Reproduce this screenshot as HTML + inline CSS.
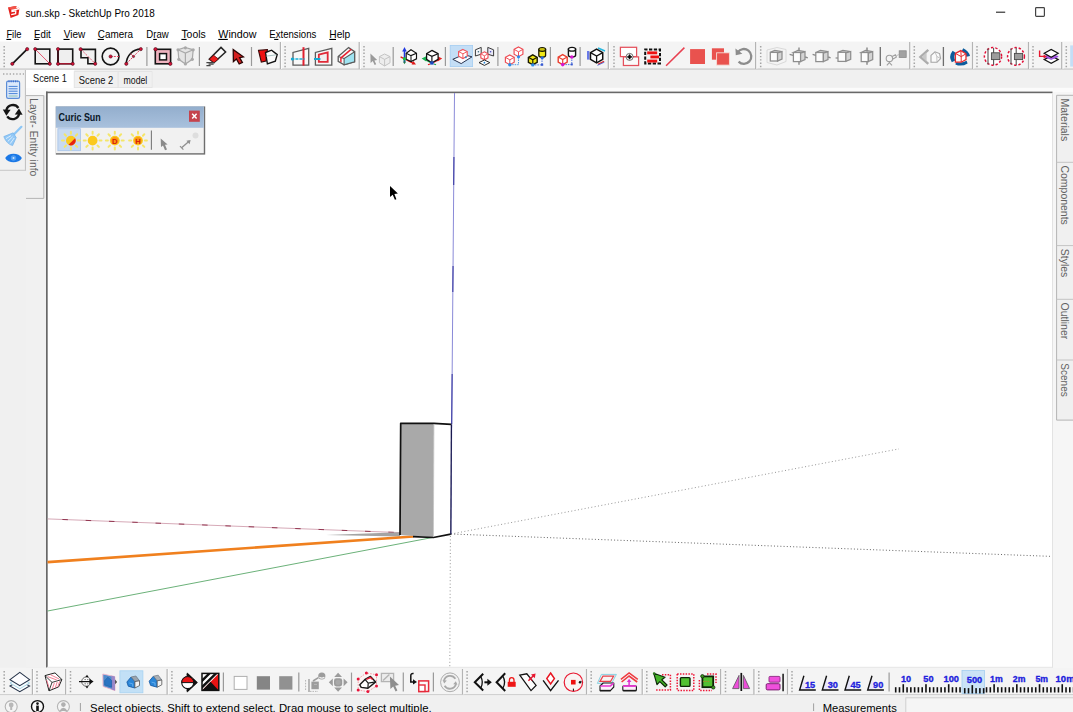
<!DOCTYPE html>
<html><head><meta charset="utf-8"><title>sun.skp - SketchUp Pro 2018</title>
<style>
html,body{margin:0;padding:0;}
body{width:1073px;height:712px;overflow:hidden;background:#fff;position:relative;font-family:"Liberation Sans",sans-serif;color:#000;}
svg{position:absolute;left:0;top:0;}
svg text{font-family:"Liberation Sans",sans-serif;}
</style></head><body>
<svg width="1073" height="712" viewBox="0 0 1073 712">
<!-- base -->
<rect x="0" y="0" width="1073" height="712" fill="#ffffff"/>
<rect x="0" y="41" width="1073" height="1" fill="#fafafa"/><rect x="0" y="42" width="1073" height="27" fill="#f4f4f4"/>
<rect x="0" y="68.5" width="1073" height="1.2" fill="#c4c4c4"/>
<rect x="0" y="70" width="1073" height="598" fill="#f0f0f0"/>
<rect x="26" y="87.6" width="1047" height="4.6" fill="#fbfbfb"/>
<rect x="46" y="92" width="1007" height="575.5" fill="#ffffff"/>
<rect x="46" y="91.6" width="1006.5" height="1.6" fill="#686868"/>
<rect x="46" y="91.6" width="1.7" height="576" fill="#686868"/>
<rect x="1052" y="93" width="1" height="575" fill="#e3e3e3"/>
<rect x="47" y="666.8" width="1006" height="1" fill="#e3e3e3"/>
<rect x="0" y="667.8" width="1073" height="27" fill="#f4f4f4"/>
<rect x="0" y="694.2" width="1073" height="1.2" fill="#c8c8c8"/>
<rect x="0" y="695.4" width="1073" height="17" fill="#f0f0f0"/>
<!-- title -->
<g><path d="M8 7.6 L15.6 6 L19.4 8.6 L18.4 15 L10.6 17.9 Z" fill="#e4201c"/><path d="M8 7.6 L15.6 6 L19.4 8.6 L11.6 10 Z" fill="#f2544a"/><path d="M16.4 7 L18.8 8.8 L12 10.2 L12 11.4 L15.8 10.9 L15.6 13.6 L11.2 14.6" fill="none" stroke="#fff" stroke-width="1.3"/></g>
<text x="25.5" y="16.6" font-size="11.2" fill="#000" font-weight="normal" textLength="129.2" lengthAdjust="spacingAndGlyphs">sun.skp - SketchUp Pro 2018</text>
<line x1="996" y1="12.2" x2="1005.2" y2="12.2" stroke="#222" stroke-width="1.1"/>
<rect x="1035.6" y="7.6" width="8.8" height="8.8" fill="none" stroke="#444" stroke-width="1.2" rx="0.8"/>
<!-- menu -->
<text x="6.4" y="37.8" font-size="10.8" fill="#000" font-weight="normal" textLength="15.1" lengthAdjust="spacingAndGlyphs">File</text>
<rect x="6.4" y="38.9" width="4.8" height="1.1" fill="#000"/>
<text x="34.1" y="37.8" font-size="10.8" fill="#000" font-weight="normal" textLength="16.7" lengthAdjust="spacingAndGlyphs">Edit</text>
<rect x="34.1" y="38.9" width="4.8" height="1.1" fill="#000"/>
<text x="63.7" y="37.8" font-size="10.8" fill="#000" font-weight="normal" textLength="21.5" lengthAdjust="spacingAndGlyphs">View</text>
<rect x="63.5" y="38.9" width="6.1" height="1.1" fill="#000"/>
<text x="97.8" y="37.8" font-size="10.8" fill="#000" font-weight="normal" textLength="35.2" lengthAdjust="spacingAndGlyphs">Camera</text>
<rect x="97.8" y="38.9" width="6.1" height="1.1" fill="#000"/>
<text x="146.3" y="37.8" font-size="10.8" fill="#000" font-weight="normal" textLength="22.3" lengthAdjust="spacingAndGlyphs">Draw</text>
<rect x="153.2" y="38.9" width="3.6" height="1.1" fill="#000"/>
<text x="181.4" y="37.8" font-size="10.8" fill="#000" font-weight="normal" textLength="24.3" lengthAdjust="spacingAndGlyphs">Tools</text>
<rect x="181.4" y="38.9" width="5.2" height="1.1" fill="#000"/>
<text x="218.3" y="37.8" font-size="10.8" fill="#000" font-weight="normal" textLength="38.1" lengthAdjust="spacingAndGlyphs">Window</text>
<rect x="218.3" y="38.9" width="9.5" height="1.1" fill="#000"/>
<text x="269.3" y="37.8" font-size="10.8" fill="#000" font-weight="normal" textLength="47.0" lengthAdjust="spacingAndGlyphs">Extensions</text>
<rect x="274.2" y="38.9" width="4.2" height="1.1" fill="#000"/>
<text x="329.3" y="37.8" font-size="10.8" fill="#000" font-weight="normal" textLength="21.0" lengthAdjust="spacingAndGlyphs">Help</text>
<rect x="329.3" y="38.9" width="6.7" height="1.1" fill="#000"/>
<!-- top toolbar -->
<line x1="4.2" y1="46" x2="4.2" y2="68" stroke="#a4a4a4" stroke-width="1.5" stroke-dasharray="1.4 1.9"/>
<line x1="12.3" y1="63.8" x2="27.2" y2="49.1" stroke="#151515" stroke-width="1.7"/><circle cx="12.3" cy="63.8" r="1.6" fill="#d41238" stroke="#4a0a18" stroke-width="0.6"/><circle cx="27.2" cy="49.1" r="1.6" fill="#d41238" stroke="#4a0a18" stroke-width="0.6"/>
<rect x="35.2" y="49.1" width="14.6" height="14.7" fill="#f0f0f0" stroke="#151515" stroke-width="1.6"/><line x1="35.2" y1="49.1" x2="49.8" y2="63.8" stroke="#e03050" stroke-width="0.8"/><circle cx="35.2" cy="49.1" r="1.6" fill="#d41238" stroke="#4a0a18" stroke-width="0.6"/><circle cx="49.8" cy="63.8" r="1.6" fill="#d41238" stroke="#4a0a18" stroke-width="0.6"/>
<rect x="58" y="49.1" width="14.7" height="14.7" fill="#efefef" stroke="#151515" stroke-width="1.6"/><line x1="58" y1="49.1" x2="58" y2="63.8" stroke="#3a0a14" stroke-width="1.6"/><line x1="58" y1="63.8" x2="72.7" y2="63.8" stroke="#d01838" stroke-width="1.1"/><circle cx="58" cy="49.1" r="1.6" fill="#d41238" stroke="#4a0a18" stroke-width="0.6"/><circle cx="58" cy="63.8" r="1.6" fill="#d41238" stroke="#4a0a18" stroke-width="0.6"/><circle cx="72.7" cy="63.8" r="1.6" fill="#d41238" stroke="#4a0a18" stroke-width="0.6"/>
<path d="M81 49.4 H95.4 V63.8 H87.9 V57.7 H81 Z" fill="#f0f0f0" stroke="#151515" stroke-width="1.6"/><line x1="81" y1="49.4" x2="95.4" y2="63.8" stroke="#e03050" stroke-width="0.8" stroke-dasharray="2 1.2"/><circle cx="80.6" cy="49.2" r="1.6" fill="#d41238" stroke="#4a0a18" stroke-width="0.6"/><circle cx="95.2" cy="63.8" r="1.6" fill="#d41238" stroke="#4a0a18" stroke-width="0.6"/>
<circle cx="110.6" cy="56.5" r="8.4" fill="none" stroke="#151515" stroke-width="1.6"/><line x1="110.6" y1="56.5" x2="119" y2="56.5" stroke="#e03050" stroke-width="0.9" stroke-dasharray="2 1.2"/><circle cx="110.6" cy="56.5" r="1.6" fill="#d41238" stroke="#4a0a18" stroke-width="0.6"/>
<path d="M126.3 63.8 A14.6 14.7 0 0 1 140.8 49.1" fill="none" stroke="#151515" stroke-width="1.6"/><line x1="126.3" y1="63.8" x2="140.8" y2="49.1" stroke="#e03050" stroke-width="0.9" stroke-dasharray="2 1.2"/><line x1="133.5" y1="56.5" x2="130.6" y2="53.6" stroke="#e03050" stroke-width="0.8"/><circle cx="126.3" cy="63.8" r="1.6" fill="#d41238" stroke="#4a0a18" stroke-width="0.6"/><circle cx="140.8" cy="49.1" r="1.6" fill="#d41238" stroke="#4a0a18" stroke-width="0.6"/><circle cx="133.5" cy="56.5" r="1.1" fill="#d41238" stroke="#4a0a18" stroke-width="0.6"/>
<line x1="146.9" y1="47" x2="146.9" y2="66" stroke="#9a9a9a" stroke-width="1.2"/>
<rect x="155.3" y="49.3" width="15.3" height="14.5" fill="#efb4c0" stroke="#151515" stroke-width="1.6"/><rect x="159.6" y="53.6" width="6.9" height="6.3" fill="#fff" stroke="#151515" stroke-width="1.5"/><circle cx="155.5" cy="49.2" r="1.7" fill="#d41238" stroke="#4a0a18" stroke-width="0.6"/><circle cx="170.3" cy="63.8" r="1.7" fill="#d41238" stroke="#4a0a18" stroke-width="0.6"/>
<g stroke="#a9a9a9" stroke-width="1.2" fill="#e4e4e4"><path d="M185.4 47.5 L193.2 49.8 L192.3 59.3 L185.4 63.9 L178.8 59.3 L178 49.8 Z"/><path d="M178 49.8 L185.4 53 L193.2 49.8 M185.4 53 V63.9" fill="none"/></g><circle cx="178" cy="49.8" r="1.6" fill="#a9a9a9"/><circle cx="193.2" cy="49.8" r="1.6" fill="#a9a9a9"/><circle cx="178.8" cy="59.3" r="1.6" fill="#a9a9a9"/><circle cx="192.3" cy="59.3" r="1.6" fill="#a9a9a9"/><circle cx="185.4" cy="63.9" r="1.6" fill="#a9a9a9"/><circle cx="185.4" cy="47.8" r="1.6" fill="#a9a9a9"/>
<line x1="199.4" y1="47" x2="199.4" y2="66" stroke="#9a9a9a" stroke-width="1.2"/>
<path d="M221 47.4 L225.6 52 L214 62.5 L209.3 59.2 Z" fill="#fafafa" stroke="#252525" stroke-width="1.5"/><path d="M213.6 55.3 L218.4 59 L214 62.7 L209.3 59.2 Z" fill="#ee1c1c" stroke="#5a1010" stroke-width="0.8"/><path d="M206.4 62.6 H214.6 M208.6 64.2 H213.6 M206.4 65.6 H210.6" stroke="#444" stroke-width="1.3" fill="none"/>
<path d="M233.2 49.6 L233.4 61.6 L236.4 59 L239.2 64 L242.4 62.4 L239.6 57.6 L243.4 56.8 Z" fill="#d42020" stroke="#2a0606" stroke-width="1.3"/>
<line x1="251.5" y1="47" x2="251.5" y2="66" stroke="#9a9a9a" stroke-width="1.2"/>
<path d="M258.5 50.4 L267.4 49.5 L266 61.1 L261.3 62 Z" fill="#ee1010" stroke="#3a0808" stroke-width="1.1"/><path d="M265.5 52.5 L271.6 50.2 L277.2 54.6 L275.3 61.1 L267.4 63.9 Z" fill="#fafafa" stroke="#111" stroke-width="1.4"/><path d="M265.9 56.2 L276.6 54.8" stroke="#8aa" stroke-width="0.7"/>
<line x1="281.59999999999997" y1="42" x2="281.59999999999997" y2="69" stroke="#fcfcfc" stroke-width="1"/><line x1="280.4" y1="42" x2="280.4" y2="69" stroke="#b4b4b4" stroke-width="1.2"/>
<line x1="285.1" y1="46" x2="285.1" y2="68" stroke="#a4a4a4" stroke-width="1.5" stroke-dasharray="1.4 1.9"/>
<path d="M293 65.1 V52.4 L308.7 48.3 V65.1 Z" fill="#f8f8f8" stroke="#5c5c5c" stroke-width="1.3"/><line x1="303.5" y1="47.2" x2="303.5" y2="65.6" stroke="#e02030" stroke-width="2"/><line x1="291.4" y1="59" x2="304.6" y2="59" stroke="#1ab0d8" stroke-width="1.6" stroke-dasharray="3 1"/><circle cx="292.4" cy="59" r="1.6" fill="#18a8d0"/>
<path d="M315.4 65.1 V52.4 L331.8 48.3 V65.1 Z" fill="#f8f8f8" stroke="#5c5c5c" stroke-width="1.3"/><path d="M318.8 54.7 L327.7 52.4 V61.8 H318.8 Z" fill="#f0f0f0" stroke="#e02a38" stroke-width="1.8"/><line x1="314" y1="59" x2="320.4" y2="59" stroke="#18a8d0" stroke-width="2"/>
<path d="M348.6 47.6 L354.6 51.7 V61.8 L344.1 64.7 L338.2 61.4 V56.5 Z" fill="#fafafa" stroke="#5c5c5c" stroke-width="1.3"/><path d="M344.1 64.7 V58.6 L354.6 51.7 V61.8 Z" fill="#9fe4f2" stroke="#5c5c5c" stroke-width="1.1"/><path d="M338.2 56.5 L344.1 58.6" stroke="#5c5c5c" stroke-width="1.1"/><path d="M340.2 61.8 V57.6 L350.6 48.8 L351.8 49.8 L341.6 58.4 V62.4 Z" fill="#e82030"/>
<line x1="360.4" y1="42" x2="360.4" y2="69" stroke="#fcfcfc" stroke-width="1"/><line x1="359.2" y1="42" x2="359.2" y2="69" stroke="#b4b4b4" stroke-width="1.2"/>
<line x1="364" y1="46" x2="364" y2="68" stroke="#a4a4a4" stroke-width="1.5" stroke-dasharray="1.4 1.9"/>
<path d="M370.4 53.6 L370.6 63 L372.8 61 L374.6 65 L376.2 64.2 L374.4 60.4 L377.2 60 Z" fill="#9a9a9a"/><g stroke="#c4c4c4" stroke-width="1" fill="#ededed"><path d="M384.6 54 L390 56.6 V62.8 L384.6 66 L379.4 62.8 V56.6 Z"/><path d="M379.4 56.6 L384.6 59.4 L390 56.6 M384.6 59.4 V66" fill="none"/></g>
<line x1="393.2" y1="47" x2="393.2" y2="66" stroke="#9a9a9a" stroke-width="1.2"/>
<path d="M400.6 56.8 L414 63.6" stroke="#e01818" stroke-width="1.4"/><path d="M416 64.6 L411.6 64.4 L413.4 61 Z" fill="#e01818"/><line x1="404.5" y1="50" x2="404.5" y2="63" stroke="#2038e0" stroke-width="1.5"/><path d="M404.5 47 L402.2 51.4 H406.8 Z" fill="#2038e0"/><path d="M404.5 64.2 L403 61.4 H406 Z" fill="#208040"/><path d="M411 49.8 L416.5 53.2 V58.8 L411 61.6 L406.2 59.2 V53.2 Z" fill="#fff" stroke="#111" stroke-width="1.15"/><path d="M406.2 53.2 L411 55.6 L416.5 53.2 M411 55.6 V61.6" fill="none" stroke="#111" stroke-width="1.05"/><rect x="403" y="57.4" width="3" height="3" fill="#20c040"/>
<path d="M431.9 63.2 L425 59.4" stroke="#18a848" stroke-width="1.5"/><path d="M421.6 58.6 L426.2 56.2 V61.6 Z" fill="#18b050"/><path d="M431.9 63.2 L439 59.4" stroke="#e01818" stroke-width="1.5"/><path d="M442.2 58.6 L437.6 56.2 V61.6 Z" fill="#e82020"/><path d="M431.9 50.4 L438.1 53.7 V59.3 L431.9 62.7 L426.6 59.3 V53.7 Z" fill="#fff" stroke="#111" stroke-width="1.25"/><path d="M426.6 53.7 L431.9 56.3 L438.1 53.7 M431.9 56.3 V62.7" fill="none" stroke="#111" stroke-width="1.15"/><rect x="430.2" y="61.4" width="3.4" height="3.2" fill="#1848c0"/><path d="M428 64.8 L430 64" stroke="#e01818" stroke-width="1.2"/><path d="M434 64 L436 64.8" stroke="#18a848" stroke-width="1.2"/>
<line x1="445.4" y1="47" x2="445.4" y2="66" stroke="#9a9a9a" stroke-width="1.2"/>
<rect x="450.2" y="45.4" width="22.4" height="21.2" fill="#c4def6" stroke="#a4cdf2" stroke-width="0.8"/>
<path d="M452.8 59.3 L463.6 54.6 L472 56.8 L461.2 63.6 Z" fill="#fbfbff" stroke="#2a3450" stroke-width="1"/><path d="M462.9 49.4 L467.2 51.6 V56.2 L462.9 58.6 L458.6 56.2 V51.6 Z" fill="#fff" stroke="#f0545c" stroke-width="1.15"/><path d="M458.6 51.6 L462.9 53.8 L467.2 51.6 M462.9 53.8 V58.6" fill="none" stroke="#f0545c" stroke-width="0.95"/><circle cx="465.8" cy="57.2" r="1" fill="#2890d0"/>
<path d="M475.4 49.8 L481.2 47.4 V54.2 L475.4 56 Z" fill="#f4f4f8" stroke="#3a3a3a" stroke-width="1"/><path d="M487.8 47.4 L493.6 49.8 V56 L487.8 54.2 Z" fill="#e8e8f6" stroke="#3a3a3a" stroke-width="1"/><circle cx="478.4" cy="51.8" r="0.8" fill="#3a6a7a"/><circle cx="490.6" cy="51.8" r="0.8" fill="#4a4ac0"/><path d="M484.4 51.8 L488 53.8 V57.8 L484.4 59.8 L480.8 57.8 V53.8 Z" fill="#fff" stroke="#f0545c" stroke-width="1.15"/><path d="M480.8 53.8 L484.4 55.8 L488 53.8 M484.4 55.8 V61.2" fill="none" stroke="#f0545c" stroke-width="0.95"/><path d="M479 62.6 L484.4 60 L489.8 62.6 L484.4 65.4 Z" fill="#fff" stroke="#2a2a2a" stroke-width="1"/><circle cx="484.4" cy="62.7" r="0.9" fill="#2080d0"/>
<line x1="497.9" y1="47" x2="497.9" y2="66" stroke="#9a9a9a" stroke-width="1.2"/>
<path d="M518.5 57 V64.7 H510" stroke="#3a8ae0" stroke-width="0.9" stroke-dasharray="1.5 1" fill="none"/>
<path d="M509.8 54.9 L514.21 57.349999999999994 V62.25 L509.8 64.7 L505.39 62.25 V57.349999999999994 Z" fill="#fff" stroke="#ee4a52" stroke-width="1.15"/><path d="M505.39 57.349999999999994 L509.8 59.8 L514.21 57.349999999999994 M509.8 59.8 V64.7" fill="none" stroke="#ee4a52" stroke-width="0.9774999999999999"/><path d="M518.5 46.9 L522.91 49.349999999999994 V54.25 L518.5 56.699999999999996 L514.09 54.25 V49.349999999999994 Z" fill="#fff" stroke="#ee4a52" stroke-width="1.15"/><path d="M514.09 49.349999999999994 L518.5 51.8 L522.91 49.349999999999994 M518.5 51.8 V56.699999999999996" fill="none" stroke="#ee4a52" stroke-width="0.9774999999999999"/>
<circle cx="509.8" cy="64.8" r="1.7" fill="#2a8ae8"/><circle cx="518.5" cy="56.8" r="1.6" fill="#2a8ae8"/>
<path d="M542 58 V64.9 H533" stroke="#3a6ae0" stroke-width="0.9" stroke-dasharray="1.5 1" fill="none"/>
<path d="M532.8 54.9 L537.2099999999999 57.349999999999994 V62.25 L532.8 64.7 L528.39 62.25 V57.349999999999994 Z" fill="#f0e818" stroke="#1a1a00" stroke-width="1.4"/><path d="M528.39 57.349999999999994 L532.8 59.8 L537.2099999999999 57.349999999999994 M532.8 59.8 V64.7" fill="none" stroke="#1a1a00" stroke-width="1.19"/>
<path d="M538.8 49.4 V55.4 A3.4 1.8 0 0 0 545.6 55.4 V49.4 Z" fill="#f0e818" stroke="#1a1a00" stroke-width="1.3"/><ellipse cx="542.2" cy="49.4" rx="3.4" ry="1.9" fill="#c8c010" stroke="#1a1a00" stroke-width="1.2"/>
<circle cx="532.8" cy="64.9" r="1.7" fill="#2a8ae8"/><circle cx="542.2" cy="57.8" r="1.6" fill="#2a6ae0"/><rect x="541" y="63.6" width="2.2" height="2.2" fill="#3a5ad0"/>
<line x1="550.4" y1="47" x2="550.4" y2="66" stroke="#9a9a9a" stroke-width="1.2"/>
<path d="M571.8 57 V64.6 H563" stroke="#3a6ae0" stroke-width="0.9" stroke-dasharray="1.5 1" fill="none"/>
<path d="M562.7 54.6 L567.2 57.1 V62.1 L562.7 64.6 L558.2 62.1 V57.1 Z" fill="#fff" stroke="#ea4030" stroke-width="1.4"/><path d="M558.2 57.1 L562.7 59.6 L567.2 57.1 M562.7 59.6 V64.6" fill="none" stroke="#ea4030" stroke-width="1.19"/>
<path d="M568.4 49.2 V55.2 A3.6 1.8 0 0 0 575.6 55.2 V49.2 Z" fill="#fff" stroke="#111" stroke-width="1.4"/><ellipse cx="572" cy="49.2" rx="3.6" ry="1.9" fill="#fff" stroke="#111" stroke-width="1.3"/>
<circle cx="562.7" cy="64.6" r="1.8" fill="#d818d0"/><circle cx="571.8" cy="57" r="1.8" fill="#d818d0"/><rect x="570.8" y="63.4" width="2" height="2" fill="#3a5ad0"/>
<line x1="580.1" y1="47" x2="580.1" y2="66" stroke="#9a9a9a" stroke-width="1.2"/>
<rect x="587" y="51" width="2.4" height="8.6" fill="#6a7ae8"/><path d="M598 48 L605 51" stroke="#28b8e0" stroke-width="1.6"/><path d="M598 64.4 L604 61.4" stroke="#e03030" stroke-width="1.3"/><path d="M597.4 65.4 L604.4 62.2" stroke="#3a6ae0" stroke-width="0.8"/><path d="M596.6 49.2 L602.72 52.6 V59.4 L596.6 62.8 L590.48 59.4 V52.6 Z" fill="#fff" stroke="#111" stroke-width="1.5"/><path d="M590.48 52.6 L596.6 56 L602.72 52.6 M596.6 56 V62.8" fill="none" stroke="#111" stroke-width="1.275"/>
<line x1="609.5" y1="42" x2="609.5" y2="69" stroke="#fcfcfc" stroke-width="1"/><line x1="608.3" y1="42" x2="608.3" y2="69" stroke="#b4b4b4" stroke-width="1.2"/>
<line x1="614" y1="46" x2="614" y2="68" stroke="#a4a4a4" stroke-width="1.5" stroke-dasharray="1.4 1.9"/>
<rect x="620.4" y="47.3" width="16.2" height="9.3" fill="#fff" stroke="#e4505c" stroke-width="1.25"/><rect x="623.4" y="56.9" width="15.2" height="8.6" fill="#fafafa" stroke="#e4505c" stroke-width="1.25"/><circle cx="629.6" cy="56.9" r="3.5" fill="#fff" stroke="#333" stroke-width="0.7"/><path d="M629.6 54.6 L630.4 56.1 L631.9 56.9 L630.4 57.7 L629.6 59.2 L628.8 57.7 L627.3 56.9 L628.8 56.1 Z" fill="#000" stroke="#000" stroke-width="0.8"/>
<rect x="645.2" y="49.6" width="14.8" height="13.8" fill="none" stroke="#111" stroke-width="2" stroke-dasharray="3.3 1.5" stroke-dashoffset="1"/><rect x="647.2" y="51.4" width="10" height="2.9" fill="#ee1212"/><rect x="650.4" y="55.5" width="8.6" height="2.9" fill="#ee1212"/><rect x="647.2" y="59.6" width="10" height="2.9" fill="#ee1212"/>
<line x1="666.1" y1="65.7" x2="684.4" y2="47.6" stroke="#e84050" stroke-width="1.5"/>
<rect x="690.1" y="49.1" width="14.9" height="14.9" fill="#e9524e"/>
<rect x="711.9" y="48.3" width="12.1" height="11.4" fill="#e9524e"/><rect x="716.6" y="52.8" width="12.8" height="12.3" fill="#e9524e" stroke="#f6dcd6" stroke-width="0.9"/>
<path d="M737.8 52.2 A7.4 7.4 0 1 1 738.6 61.6" fill="none" stroke="#8c8c8c" stroke-width="2.3"/><path d="M735.4 48.4 L735.8 55.2 L742.4 53.8 Z" fill="#8c8c8c"/>
<line x1="756.8000000000001" y1="42" x2="756.8000000000001" y2="69" stroke="#fcfcfc" stroke-width="1"/><line x1="755.6" y1="42" x2="755.6" y2="69" stroke="#b4b4b4" stroke-width="1.2"/>
<line x1="760.7" y1="46" x2="760.7" y2="68" stroke="#a4a4a4" stroke-width="1.5" stroke-dasharray="1.4 1.9"/>
<path d="M767 50 L777 47.5 L786 49.5 V61.5 L777 65 L767 62.5 Z" fill="none" stroke="#d6d6d6" stroke-width="0.9"/>
<g stroke="#8e8e8e" stroke-width="1.25"><path d="M770.3 52.4 L774.746 50.4 L782 51.6 L777.554 53.0 Z" fill="#d8d8d8"/><rect x="770.3" y="52.4" width="7.254000000000019" height="8.600000000000001" fill="#fcfcfc"/><path d="M777.554 53.0 L782 51.6 V59 L777.554 61 Z" fill="#d4d4d4"/></g>
<g stroke="#8e8e8e" stroke-width="1.25"><path d="M793.4 52.5 L797.808 50.5 L805 51.7 L800.592 53.1 Z" fill="#d8d8d8"/><rect x="793.4" y="52.5" width="7.192000000000007" height="9.100000000000001" fill="#fcfcfc"/><path d="M800.592 53.1 L805 51.7 V59.6 L800.592 61.6 Z" fill="#d4d4d4"/></g><path d="M799 47.6 V51 M799 62 V64.8 M789.6 54.4 L793.2 55.4 M805.2 57 L807.8 57.8" stroke="#8a8a8a" stroke-width="1.4" fill="none"/>
<g stroke="#8e8e8e" stroke-width="1.25"><path d="M815.8 52.5 L820.4359999999999 50.5 L828 51.7 L823.364 53.1 Z" fill="#d8d8d8"/><rect x="815.8" y="52.5" width="7.564000000000078" height="9.100000000000001" fill="#fcfcfc"/><path d="M823.364 53.1 L828 51.7 V59.6 L823.364 61.6 Z" fill="#d4d4d4"/></g><path d="M812.6 54.4 L815.8 55.4 M828.2 57 L830.6 57.8" stroke="#8a8a8a" stroke-width="1.4" fill="none"/>
<g stroke="#8e8e8e" stroke-width="1.25"><path d="M838 52.3 L842.826 50.3 L850.7 51.5 L845.874 52.9 Z" fill="#d8d8d8"/><rect x="838" y="52.3" width="7.874000000000024" height="9.100000000000001" fill="#fcfcfc"/><path d="M845.874 52.9 L850.7 51.5 V59.4 L845.874 61.4 Z" fill="#d4d4d4"/></g><path d="M835.6 58 H838" stroke="#8a8a8a" stroke-width="1.2" fill="none"/>
<g stroke="#8e8e8e" stroke-width="1.25"><path d="M861.2 52.5 L865.57 50.5 L872.7 51.7 L868.33 53.1 Z" fill="#d8d8d8"/><rect x="861.2" y="52.5" width="7.1299999999999955" height="9.100000000000001" fill="#fcfcfc"/><path d="M868.33 53.1 L872.7 51.7 V59.6 L868.33 61.6 Z" fill="#d4d4d4"/></g><path d="M867 47.4 V51.4 M867 61.8 V64.8" stroke="#8a8a8a" stroke-width="1.5" fill="none"/>
<line x1="880.3" y1="47" x2="880.3" y2="66" stroke="#6e6e6e" stroke-width="1.3"/>
<g stroke="#a0a0a0" stroke-width="1.1" fill="#f4f4f4"><circle cx="889.4" cy="58.4" r="3.2"/><path d="M892.2 56.4 L895.4 54.8 L896.4 57 L892.8 59.2 Z"/><path d="M889.4 61.6 V63.4 M889.4 62.6 L886.8 65.4 M889.4 62.6 L892 65.4" fill="none"/></g><rect x="899.2" y="50.8" width="7" height="6.6" fill="#a2a2a2" stroke="#8a8a8a" stroke-width="0.8"/><path d="M896.4 55.6 L899 54.6" stroke="#b0b0b0" stroke-width="0.8"/>
<line x1="910.9000000000001" y1="42" x2="910.9000000000001" y2="69" stroke="#fcfcfc" stroke-width="1"/><line x1="909.7" y1="42" x2="909.7" y2="69" stroke="#b4b4b4" stroke-width="1.2"/>
<line x1="914.3" y1="46" x2="914.3" y2="68" stroke="#a4a4a4" stroke-width="1.5" stroke-dasharray="1.4 1.9"/>
<path d="M928.3 49.9 L920.4 56.9 L928.3 63.9" fill="none" stroke="#acacac" stroke-width="2.4"/><path d="M926.6 52.4 L922 56.9 L926.6 61.4 Z" fill="#c8c8c8"/><path d="M931 55.4 L935 51.8 L939.6 53.6 L940.6 58.6 L937 62.2 H931 Z" fill="#fafafa" stroke="#a4a4a4" stroke-width="1.1"/><path d="M935 51.8 L936.8 56.4 L937 62.2 M936.8 56.4 L940.6 58.6" fill="none" stroke="#b4b4b4" stroke-width="0.8"/>
<line x1="943.4" y1="47" x2="943.4" y2="66" stroke="#6e6e6e" stroke-width="1.3"/>
<path d="M952.6 50.8 Q948.2 56.6 951.8 62.2 L955.2 60.4 Q953.4 56.6 955.6 52.8 Z" fill="#0c5c9c"/><path d="M963.2 48.2 Q968.6 50.6 970 56 L966.4 56.8 Q965.4 53.4 961.6 51.4 Z" fill="#0c5c9c"/><path d="M956.2 61.6 Q961.4 63.8 966.6 60.8 L967.6 63.4 Q961.4 67.2 955.4 64.4 Z" fill="#0c5c9c"/>
<path d="M955.4 53.4 L960.8 50.6 L966 53.8 V59.6 L961.2 62.2 H955.4 Z" fill="#fff" stroke="#e82c30" stroke-width="1.3"/><path d="M960.8 50.6 L961.2 56.6 V62.2 M961.2 56.6 L966 53.8 M955.4 53.4 L961.2 56.6" fill="none" stroke="#e82c30" stroke-width="1"/>
<line x1="973.7" y1="42" x2="973.7" y2="69" stroke="#fcfcfc" stroke-width="1"/><line x1="972.5" y1="42" x2="972.5" y2="69" stroke="#b4b4b4" stroke-width="1.2"/>
<line x1="977" y1="46" x2="977" y2="68" stroke="#a4a4a4" stroke-width="1.5" stroke-dasharray="1.4 1.9"/>
<ellipse cx="993" cy="56.4" rx="8.6" ry="8.8" fill="#fff" stroke="#e01038" stroke-width="1.5" stroke-dasharray="2.4 1.9"/><path d="M988 48.6 V64.4 M993.6 48 V65" stroke="#555" stroke-width="1.1"/><rect x="991.4" y="52.8" width="8.4" height="6.8" fill="#9c9c9c" stroke="#4a4a4a" stroke-width="0.9"/>
<ellipse cx="1016" cy="56.4" rx="8.4" ry="8.8" fill="#fff" stroke="#e01038" stroke-width="1.5" stroke-dasharray="2.4 1.9"/><path d="M1011 48.6 V64.4 M1016.2 48 V65" stroke="#555" stroke-width="1.1"/><rect x="1014.4" y="53.4" width="8.2" height="6.2" fill="#9c9c9c" stroke="#4a4a4a" stroke-width="0.9"/>
<line x1="1029.7" y1="42" x2="1029.7" y2="69" stroke="#fcfcfc" stroke-width="1"/><line x1="1028.5" y1="42" x2="1028.5" y2="69" stroke="#b4b4b4" stroke-width="1.2"/>
<line x1="1033" y1="46" x2="1033" y2="68" stroke="#a4a4a4" stroke-width="1.5" stroke-dasharray="1.4 1.9"/>
<path d="M1044.2 59.6 L1051.2 55.8 L1058.2 59.6 L1051.2 63.4 Z" fill="#fff" stroke="#111" stroke-width="1.2"/><path d="M1044.2 56.6 L1051.2 54 L1058.2 56.6 L1051.2 59.4 Z" fill="#b060e8" stroke="#8a40d8" stroke-width="0.8"/><path d="M1044.2 53.3 L1051.2 49.4 L1058.2 53.3 L1051.2 57.2 Z" fill="#fff" stroke="#111" stroke-width="1.2"/><path d="M1039.6 50.4 V56.4 H1045" fill="none" stroke="#e81830" stroke-width="1.4"/><path d="M1047 56.4 L1043.6 54.4 V58.4 Z" fill="#e81830"/>
<line x1="1062.9" y1="42" x2="1062.9" y2="69" stroke="#fcfcfc" stroke-width="1"/><line x1="1061.7" y1="42" x2="1061.7" y2="69" stroke="#b4b4b4" stroke-width="1.2"/>
<line x1="1066.3" y1="46" x2="1066.3" y2="68" stroke="#a4a4a4" stroke-width="1.5" stroke-dasharray="1.4 1.9"/>
<rect x="1070.2" y="45.4" width="4" height="21.2" fill="#c4def6"/>
<!-- scene tabs -->
<rect x="26" y="70" width="48.2" height="18" fill="#ffffff"/>
<rect x="74.2" y="71.6" width="44" height="16" fill="#f0f0f0" stroke="#e2e2e2" stroke-width="0.8"/>
<rect x="118.2" y="71.6" width="34" height="16" fill="#f0f0f0" stroke="#e2e2e2" stroke-width="0.8"/>
<rect x="152.6" y="70" width="921" height="17.6" fill="#f0f0f0"/>
<text x="33" y="81.8" font-size="10.6" fill="#111" font-weight="normal" textLength="33.8" lengthAdjust="spacingAndGlyphs">Scene 1</text>
<text x="78.8" y="83.6" font-size="10.6" fill="#111" font-weight="normal" textLength="34.4" lengthAdjust="spacingAndGlyphs">Scene 2</text>
<text x="123.5" y="83.6" font-size="10.6" fill="#111" font-weight="normal" textLength="23.8" lengthAdjust="spacingAndGlyphs">model</text>
<!-- left toolbar -->
<rect x="0" y="70" width="25.2" height="100" fill="#f1f1f1"/>
<rect x="24.9" y="70" width="1" height="100.6" fill="#bebebe"/>
<rect x="0" y="169.8" width="26" height="1" fill="#c8c8c8"/>
<line x1="3" y1="74" x2="24" y2="74" stroke="#a8a8a8" stroke-width="1.4" stroke-dasharray="1.4 1.9"/>
<rect x="6.6" y="81.2" width="13" height="17.2" rx="1.6" fill="#dce9fb" stroke="#5b8dd6" stroke-width="1.2"/><path d="M8.6 86.4 H17.6 M8.6 88.8 H17.6 M8.6 91.2 H17.6 M8.6 93.6 H17.6" stroke="#4a84d8" stroke-width="1"/><path d="M8.6 96 H17.6" stroke="#8ac0b0" stroke-width="1"/><path d="M8.4 81.4 H17.8" stroke="#3f6fd0" stroke-width="1.6" stroke-dasharray="1.2 1"/>
<path d="M6.3 110.4 A6.7 6.7 0 0 1 18.4 108" fill="none" stroke="#151515" stroke-width="2.3"/><path d="M19.2 113.8 A6.7 6.7 0 0 1 7.2 116.4" fill="none" stroke="#151515" stroke-width="2.3"/><path d="M2.8 109.4 L10.6 109.8 L6.4 115.8 Z" fill="#151515"/><path d="M22.6 114.8 L14.8 114.4 L19 108.4 Z" fill="#151515"/>
<path d="M21.4 126.8 L13.6 134.8" stroke="#8cc6f6" stroke-width="2.2" stroke-linecap="round"/><path d="M13.2 132.8 L16.2 137.6 L12.6 145.6 Q6.6 144 3.8 136.6 Z" fill="#92c8f6" stroke="#72b2ea" stroke-width="0.7"/><path d="M6 138.6 L11 135.6 M7.8 141.4 L12.6 136.8 M10.2 143.6 L14.2 138" stroke="#e2f1fd" stroke-width="0.9"/>
<path d="M5.2 158 C8 152.2 19 152.2 21.9 158 C19 163.8 8 163.8 5.2 158 Z" fill="#1b78e6"/><circle cx="13.5" cy="158" r="2.7" fill="#4d9cf2"/><circle cx="13.5" cy="158" r="1" fill="#cfe4fb"/>
<rect x="26" y="92.2" width="20" height="575" fill="#f1f1f1"/>
<rect x="26" y="92" width="20" height="3.4" fill="#fafafa"/>
<rect x="26" y="95.6" width="18.4" height="103" fill="#f0f0f0"/>
<path d="M26 95.6 H43.8 V198.4 H26" fill="none" stroke="#b4b4b4" stroke-width="1"/>
<text transform="translate(29.8 98.2) rotate(90)" font-size="10.6" fill="#626262" textLength="78.2" lengthAdjust="spacingAndGlyphs">Layer- Entity info</text>
<!-- right tabs -->
<rect x="1053" y="92" width="20" height="576" fill="#f6f6f6"/>
<rect x="1056.6" y="95.3" width="17" height="324.8" fill="#f0f0f0"/>
<path d="M1073 95.3 H1056.6 V420.1 H1073" fill="none" stroke="#b4b4b4" stroke-width="1"/>
<text transform="translate(1061.2 98.5) rotate(90)" font-size="10.6" fill="#626262" textLength="42.7" lengthAdjust="spacingAndGlyphs">Materials</text>
<line x1="1056.6" y1="162.3" x2="1073" y2="162.3" stroke="#c4c4c4" stroke-width="1"/>
<text transform="translate(1061.2 165.5) rotate(90)" font-size="10.6" fill="#626262" textLength="59.3" lengthAdjust="spacingAndGlyphs">Components</text>
<line x1="1056.6" y1="245.6" x2="1073" y2="245.6" stroke="#c4c4c4" stroke-width="1"/>
<text transform="translate(1061.2 248.79999999999998) rotate(90)" font-size="10.6" fill="#626262" textLength="28.5" lengthAdjust="spacingAndGlyphs">Styles</text>
<line x1="1056.6" y1="299.3" x2="1073" y2="299.3" stroke="#c4c4c4" stroke-width="1"/>
<text transform="translate(1061.2 302.5) rotate(90)" font-size="10.6" fill="#626262" textLength="36.7" lengthAdjust="spacingAndGlyphs">Outliner</text>
<line x1="1056.6" y1="360" x2="1073" y2="360" stroke="#c4c4c4" stroke-width="1"/>
<text transform="translate(1061.2 363.2) rotate(90)" font-size="10.6" fill="#626262" textLength="33.6" lengthAdjust="spacingAndGlyphs">Scenes</text>
<!-- viewport -->
<line x1="451" y1="534" x2="899" y2="448.9" stroke="#8a8a8a" stroke-width="0.9" stroke-dasharray="1 2.4"/>
<line x1="451" y1="534" x2="1052" y2="556.4" stroke="#555" stroke-width="0.9" stroke-dasharray="1 2.2"/>
<line x1="450.4" y1="536" x2="449.8" y2="667" stroke="#8a8a8a" stroke-width="0.9" stroke-dasharray="1 2.4"/>
<line x1="454.5" y1="93" x2="450.8" y2="534" stroke="#8a8ad8" stroke-width="1"/>
<line x1="453.96" y1="157" x2="453.73" y2="185" stroke="#2e2e9c" stroke-width="1"/>
<line x1="453.05" y1="266" x2="452.83" y2="292" stroke="#2e2e9c" stroke-width="1"/>
<line x1="452.14" y1="374" x2="451.72" y2="424" stroke="#2e2e9c" stroke-width="1"/>
<line x1="47.6" y1="518.9" x2="400" y2="532.6" stroke="#cf9aaa" stroke-width="0.85"/>
<line x1="47.6" y1="518.9" x2="400" y2="532.6" stroke="#8a2844" stroke-width="0.9" stroke-dasharray="5.5 17.8" stroke-dashoffset="8.5"/>
<line x1="47.6" y1="611" x2="433" y2="537.4" stroke="#5aa86a" stroke-width="0.9"/>
<path d="M326 534.9 L400 532.3 V536.4 Z" fill="#a4a4a4"/>
<line x1="47.6" y1="562.1" x2="413.4" y2="536.5" stroke="#f0801e" stroke-width="2.6"/>
<path d="M400.7 423.3 L433.9 423.3 L433.4 537.3 L399.9 535 Z" fill="#a9a9a9"/>
<path d="M433.9 423.3 L451.4 424.4 L450.8 534.2 L433.4 537.3 Z" fill="#ffffff"/>
<path d="M400 535 L400.7 423.3 L433.9 423.3 L451.4 424.4" fill="none" stroke="#111" stroke-width="1.7" stroke-linejoin="round"/>
<path d="M413 536.6 L433.4 537.5 L450.8 534.2" fill="none" stroke="#111" stroke-width="1.7" stroke-linejoin="round"/>
<line x1="451.4" y1="424.4" x2="450.8" y2="534.2" stroke="#1a1a50" stroke-width="1.3"/>
<line x1="433.9" y1="424" x2="433.4" y2="537" stroke="#b8b8b8" stroke-width="0.7"/>
<path d="M390 186.1 V197.1 L392.7 194.7 L394.9 199.8 L396.4 199.3 L394.4 194 L397.9 193.6 Z" fill="#000"/>
<!-- curic sun -->
<defs><linearGradient id="cs" x1="0" y1="0" x2="0" y2="1"><stop offset="0" stop-color="#93aecd"/><stop offset="1" stop-color="#a9c1dd"/></linearGradient></defs>
<rect x="55.8" y="106.4" width="149.4" height="48.2" fill="#6e6e6e"/>
<rect x="55.8" y="106.4" width="148" height="46.8" fill="#f1f1f1"/>
<rect x="55.8" y="106.4" width="148" height="21.4" fill="url(#cs)"/>
<text x="58.6" y="120.9" font-size="10.4" fill="#0a1626" font-weight="bold" textLength="42.2" lengthAdjust="spacingAndGlyphs">Curic Sun</text>
<rect x="189" y="110.6" width="10.8" height="11.2" fill="#c5434d"/><path d="M192.2 113.8 L196.6 118.6 M196.6 113.8 L192.2 118.6" stroke="#fff" stroke-width="1.5"/>
<rect x="57.9" y="128.7" width="22.6" height="22" fill="#c8daf1" stroke="#a6c3ea" stroke-width="0.8"/>
<line x1="70.9" y1="147.5" x2="70.9" y2="149.5" stroke="#f4e66a" stroke-width="2" stroke-linecap="round"/><line x1="66.0" y1="145.5" x2="64.6" y2="146.9" stroke="#f4e66a" stroke-width="2" stroke-linecap="round"/><line x1="64.0" y1="140.6" x2="62.0" y2="140.6" stroke="#f4e66a" stroke-width="2" stroke-linecap="round"/><line x1="66.0" y1="135.7" x2="64.6" y2="134.3" stroke="#f4e66a" stroke-width="2" stroke-linecap="round"/><line x1="70.9" y1="133.7" x2="70.9" y2="131.7" stroke="#f4e66a" stroke-width="2" stroke-linecap="round"/><line x1="75.8" y1="135.7" x2="77.2" y2="134.3" stroke="#f4e66a" stroke-width="2" stroke-linecap="round"/><line x1="77.8" y1="140.6" x2="79.8" y2="140.6" stroke="#f4e66a" stroke-width="2" stroke-linecap="round"/><line x1="75.8" y1="145.5" x2="77.2" y2="146.9" stroke="#f4e66a" stroke-width="2" stroke-linecap="round"/><circle cx="70.9" cy="140.6" r="4.9" fill="#fbc91c"/><path d="M75.10000000000001 138.2 A4.9 4.9 0 0 1 68.5 144.79999999999998 Z" fill="#e8220e"/><line x1="92.6" y1="147.5" x2="92.6" y2="149.5" stroke="#f4e66a" stroke-width="2" stroke-linecap="round"/><line x1="87.7" y1="145.5" x2="86.3" y2="146.9" stroke="#f4e66a" stroke-width="2" stroke-linecap="round"/><line x1="85.7" y1="140.6" x2="83.7" y2="140.6" stroke="#f4e66a" stroke-width="2" stroke-linecap="round"/><line x1="87.7" y1="135.7" x2="86.3" y2="134.3" stroke="#f4e66a" stroke-width="2" stroke-linecap="round"/><line x1="92.6" y1="133.7" x2="92.6" y2="131.7" stroke="#f4e66a" stroke-width="2" stroke-linecap="round"/><line x1="97.5" y1="135.7" x2="98.9" y2="134.3" stroke="#f4e66a" stroke-width="2" stroke-linecap="round"/><line x1="99.5" y1="140.6" x2="101.5" y2="140.6" stroke="#f4e66a" stroke-width="2" stroke-linecap="round"/><line x1="97.5" y1="145.5" x2="98.9" y2="146.9" stroke="#f4e66a" stroke-width="2" stroke-linecap="round"/><circle cx="92.6" cy="140.6" r="4.9" fill="#fbc91c"/><line x1="114.8" y1="147.5" x2="114.8" y2="149.5" stroke="#f4e66a" stroke-width="2" stroke-linecap="round"/><line x1="109.9" y1="145.5" x2="108.5" y2="146.9" stroke="#f4e66a" stroke-width="2" stroke-linecap="round"/><line x1="107.9" y1="140.6" x2="105.9" y2="140.6" stroke="#f4e66a" stroke-width="2" stroke-linecap="round"/><line x1="109.9" y1="135.7" x2="108.5" y2="134.3" stroke="#f4e66a" stroke-width="2" stroke-linecap="round"/><line x1="114.8" y1="133.7" x2="114.8" y2="131.7" stroke="#f4e66a" stroke-width="2" stroke-linecap="round"/><line x1="119.7" y1="135.7" x2="121.1" y2="134.3" stroke="#f4e66a" stroke-width="2" stroke-linecap="round"/><line x1="121.7" y1="140.6" x2="123.7" y2="140.6" stroke="#f4e66a" stroke-width="2" stroke-linecap="round"/><line x1="119.7" y1="145.5" x2="121.1" y2="146.9" stroke="#f4e66a" stroke-width="2" stroke-linecap="round"/><circle cx="114.8" cy="140.6" r="4.9" fill="#fbc91c"/><circle cx="114.8" cy="140.6" r="3.6" fill="#fb9a12"/><text x="114.8" y="143.5" font-size="7.6" font-weight="bold" fill="#d8200c" text-anchor="middle">D</text><line x1="138.0" y1="147.5" x2="138.0" y2="149.5" stroke="#f4e66a" stroke-width="2" stroke-linecap="round"/><line x1="133.1" y1="145.5" x2="131.7" y2="146.9" stroke="#f4e66a" stroke-width="2" stroke-linecap="round"/><line x1="131.1" y1="140.6" x2="129.1" y2="140.6" stroke="#f4e66a" stroke-width="2" stroke-linecap="round"/><line x1="133.1" y1="135.7" x2="131.7" y2="134.3" stroke="#f4e66a" stroke-width="2" stroke-linecap="round"/><line x1="138.0" y1="133.7" x2="138.0" y2="131.7" stroke="#f4e66a" stroke-width="2" stroke-linecap="round"/><line x1="142.9" y1="135.7" x2="144.3" y2="134.3" stroke="#f4e66a" stroke-width="2" stroke-linecap="round"/><line x1="144.9" y1="140.6" x2="146.9" y2="140.6" stroke="#f4e66a" stroke-width="2" stroke-linecap="round"/><line x1="142.9" y1="145.5" x2="144.3" y2="146.9" stroke="#f4e66a" stroke-width="2" stroke-linecap="round"/><circle cx="138" cy="140.6" r="4.9" fill="#fbc91c"/><circle cx="138" cy="140.6" r="3.6" fill="#fb9a12"/><text x="138" y="143.5" font-size="7.6" font-weight="bold" fill="#d8200c" text-anchor="middle">H</text>
<line x1="151.4" y1="130.6" x2="151.4" y2="149.8" stroke="#7a7a7a" stroke-width="1.1"/>
<path d="M160.7 138.4 L161 147 L163 145.4 L165 150.2 L167 149.4 L165 144.8 L167.6 144.4 Z" fill="#8a8a8a"/>
<path d="M181.6 147.8 L189.4 141" stroke="#909090" stroke-width="1.4"/><path d="M190.6 140 L186.4 140.8 L189.6 144.2 Z" fill="#909090"/><path d="M180 146.2 L183.4 149.6" stroke="#909090" stroke-width="1.2"/><circle cx="195.5" cy="135.4" r="3" fill="#dedede"/>
<!-- bottom toolbar -->
<line x1="4.2" y1="671" x2="4.2" y2="693" stroke="#a4a4a4" stroke-width="1.5" stroke-dasharray="1.4 1.9"/>
<path d="M10 686 L19.8 680.6 L29.6 686 L19.8 691.6 Z" fill="#fff" stroke="#26344a" stroke-width="1.05"/><path d="M10 683 L19.8 677.2 L29.6 683 L19.8 688.8 Z" fill="#f4fbfe" stroke="#a6d4e6" stroke-width="1"/><path d="M10 679.7 L19.8 672.4 L29.6 679.7 L19.8 685.6 Z" fill="#fdfdff" stroke="#26344a" stroke-width="1.05"/>
<line x1="33.6" y1="669" x2="33.6" y2="694.4" stroke="#fcfcfc" stroke-width="1"/><line x1="32.4" y1="669" x2="32.4" y2="694.4" stroke="#b4b4b4" stroke-width="1.2"/>
<line x1="37" y1="671" x2="37" y2="693" stroke="#a4a4a4" stroke-width="1.5" stroke-dasharray="1.4 1.9"/>
<path d="M45 675.6 L55 672.9 L61.9 679.5 L58.6 686.9 L49 690.8 Z" fill="#fff" stroke="#222" stroke-width="1"/><path d="M45 675.6 L52 682.4 L61.9 679.5 M52 682.4 L49 690.8" fill="none" stroke="#222" stroke-width="0.9"/><path d="M47.6 676.6 L56.8 680 M50.6 674.8 L59.2 679 M46.6 680 L49 687.4 M54.4 682.8 L52.2 689 M57.2 682 L55.2 688 M59.8 681.2 L57.8 686.8" stroke="#f07088" stroke-width="0.9" fill="none"/>
<line x1="66.8" y1="669" x2="66.8" y2="694.4" stroke="#fcfcfc" stroke-width="1"/><line x1="65.6" y1="669" x2="65.6" y2="694.4" stroke="#b4b4b4" stroke-width="1.2"/>
<line x1="70.5" y1="671" x2="70.5" y2="693" stroke="#a4a4a4" stroke-width="1.5" stroke-dasharray="1.4 1.9"/>
<circle cx="86.3" cy="681.6" r="4.6" fill="#fafafa" stroke="#444" stroke-width="0.8"/><path d="M79 681.6 H91" stroke="#111" stroke-width="1.25"/><path d="M93.6 681.6 L89.4 678.8 V684.4 Z" fill="#111"/><path d="M87 674.8 L85.4 677 H88.6 Z M87 688.4 L85.4 686.2 H88.6 Z" fill="#111"/><path d="M84.4 679.6 H86 M87 679.6 H88.4 M84.4 683.8 H86 M87 683.8 H88.4" stroke="#555" stroke-width="0.7"/>
<path d="M102.8 674 L114.8 676.6 L115 690.6 L103 686.4 Z" fill="#4f8ccc" stroke="#f0b4ca" stroke-width="0.9"/><path d="M111.4 675.8 L114.8 676.6 L115 690.6 L111.6 689.4 Z" fill="#9a88c8"/><path d="M104.6 680.8 L107.8 677.2 L111.6 680.4 V687.2 L104.8 685 Z" fill="#2a74c2" stroke="#1f5ea4" stroke-width="0.6"/><path d="M115.2 679.6 L117 681.9 L115.2 684.2 Z" fill="#333"/>
<rect x="119.9" y="670.8" width="23" height="22" fill="#c2e0f6" stroke="#a6d2f2" stroke-width="0.8"/>
<path d="M126.9 682.0 L131.10000000000002 677.0 L134.9 681.6 V688.0 L128.3 686.2 Z" fill="#2a86d8" stroke="#1a5ea8" stroke-width="0.9"/><path d="M131.10000000000002 677.0 L135.9 676.0 L139.5 680.8000000000001 L134.9 681.6 Z" fill="#9aa4ae" stroke="#6a7480" stroke-width="0.7"/><path d="M134.9 681.6 L139.5 680.8000000000001 V685.6 L134.9 688.0 Z" fill="#f4f4f4" stroke="#555" stroke-width="0.8"/><path d="M129.3 683.0 L132.70000000000002 683.8000000000001 V686.6" fill="none" stroke="#66b0f0" stroke-width="0.9"/>
<path d="M149.2 681.1999999999999 L153.4 676.1999999999999 L157.2 680.8 V687.1999999999999 L150.6 685.4 Z" fill="#2a86d8" stroke="#1a5ea8" stroke-width="0.9"/><path d="M153.4 676.1999999999999 L158.2 675.1999999999999 L161.79999999999998 680.0 L157.2 680.8 Z" fill="#aab0b6" stroke="#6a7480" stroke-width="0.7"/><path d="M157.2 680.8 L161.79999999999998 680.0 V684.8 L157.2 687.1999999999999 Z" fill="#f4f4f4" stroke="#555" stroke-width="0.8"/><path d="M151.6 682.1999999999999 L155.0 683.0 V685.8" fill="none" stroke="#66b0f0" stroke-width="0.9"/>
<line x1="168.29999999999998" y1="669" x2="168.29999999999998" y2="694.4" stroke="#fcfcfc" stroke-width="1"/><line x1="167.1" y1="669" x2="167.1" y2="694.4" stroke="#b4b4b4" stroke-width="1.2"/>
<line x1="171.9" y1="671" x2="171.9" y2="693" stroke="#a4a4a4" stroke-width="1.5" stroke-dasharray="1.4 1.9"/>
<path d="M187 672.6 L197.8 682.6 L187 692.4 L186.4 690 L190 682.6 L186.4 675 Z" fill="#111"/><path d="M188 673.4 L197.4 682.6 L188 691.6 Z" fill="#111"/><circle cx="187.7" cy="682.6" r="6" fill="#fff" stroke="#111" stroke-width="1.1"/><path d="M181.7 682.6 A6 6 0 0 1 193.7 682.6 Z" fill="#e81414" stroke="#111" stroke-width="1"/>
<rect x="202" y="673.4" width="16.8" height="17" fill="#fff"/><path d="M202 690.4 L218.8 673.4 V690.4 Z" fill="#e81414"/><path d="M202 690.4 L210.6 681.8 L218.8 690.4 Z" fill="#111"/><path d="M202 679 L207.6 673.4 H211 L202 682.4 Z M202 685.6 L214.2 673.4 H217.6 L202 689 Z" fill="#111"/><rect x="202" y="673.4" width="16.8" height="17" fill="none" stroke="#111" stroke-width="1.5"/>
<line x1="223.4" y1="672.6" x2="223.4" y2="691.6" stroke="#9a9a9a" stroke-width="1.2"/>
<rect x="234.2" y="676.4" width="12.8" height="13" fill="#fff" stroke="#aeaeae" stroke-width="1"/>
<rect x="256.8" y="676.2" width="13.2" height="13.4" fill="#858585"/>
<rect x="279.2" y="676.2" width="13.2" height="13.4" fill="#919191"/>
<line x1="298.8" y1="672.6" x2="298.8" y2="691.6" stroke="#9a9a9a" stroke-width="1.2"/>
<path d="M305.6 680 V690" stroke="#b4b4b4" stroke-width="1" stroke-dasharray="1.6 1.2"/><path d="M309 679 V692" stroke="#909090" stroke-width="1.2"/><path d="M310 691.4 H318" stroke="#b8b8b8" stroke-width="1" stroke-dasharray="1.5 1"/><rect x="311.4" y="681.6" width="7.4" height="7.6" fill="#9c9c9c"/><path d="M313 681 L318.4 677.6" stroke="#9c9c9c" stroke-width="1.6"/><circle cx="321.8" cy="676" r="3.6" fill="#9c9c9c"/><path d="M319.4 677.2 Q321.8 679 324.4 677.2" stroke="#f4f4f4" stroke-width="1.2" fill="none"/><path d="M314 684.4 H317" stroke="#c0c0c0" stroke-width="0.8"/>
<rect x="334" y="678.2" width="8.2" height="8.2" rx="2.4" fill="#9c9c9c"/><circle cx="338.1" cy="682.3" r="2.6" fill="#a8a8a8"/><path d="M338.1 672.8 L342 677 H334.2 Z M338.1 691.8 L342 687.6 H334.2 Z M328.8 682.3 L332.8 678.4 V686.2 Z M347.6 682.3 L343.6 678.4 V686.2 Z" fill="#9c9c9c"/>
<line x1="351.5" y1="672.6" x2="351.5" y2="691.6" stroke="#9a9a9a" stroke-width="1.2"/>
<path d="M358.2 678.9 L366.4 672.9 L376.5 674.8 V686 L367.9 691.6 L358.2 690.1 Z" fill="#fdf4f4" stroke="#f08a96" stroke-width="0.8" stroke-dasharray="1.6 1.2"/>
<path d="M359.8 684.8 L365 679.4 L370.5 676.4 L375.7 681.9 L367.9 688.2 L361.2 687.4 Z" fill="#fff" stroke="#1a1a1a" stroke-width="1.4" stroke-linejoin="round"/><path d="M365 679.4 L368.2 683.2 L375.7 681.9 M368.2 683.2 L367.9 688.2" fill="none" stroke="#1a1a1a" stroke-width="1.2"/><path d="M366.4 679.4 L370.4 677.6 L372.6 679.6" stroke="#e81c34" stroke-width="1.4" fill="none"/>
<circle cx="358.2" cy="678.9" r="1.5" fill="#e8143a"/>
<circle cx="366.4" cy="672.9" r="1.5" fill="#e8143a"/>
<circle cx="376.5" cy="674.8" r="1.5" fill="#e8143a"/>
<circle cx="376.5" cy="686" r="1.5" fill="#e8143a"/>
<circle cx="367.9" cy="691.6" r="1.5" fill="#e8143a"/>
<circle cx="358.2" cy="690.1" r="1.5" fill="#e8143a"/>
<rect x="381.4" y="673.4" width="12.2" height="8.2" fill="#ececec" stroke="#b4b4b4" stroke-width="1.3"/><path d="M383 680.6 L389.4 674.4" stroke="#b4b4b4" stroke-width="1.4"/><path d="M389.9 676.6 L390.4 689 L393.2 686.4 L395.6 691.4 L397.4 690.6 L395.2 685.8 L399 685 Z" fill="#8e8e8e"/>
<line x1="403.3" y1="672.6" x2="403.3" y2="691.6" stroke="#9a9a9a" stroke-width="1.2"/>
<path d="M413.6 673.6 Q410.6 673.2 410.8 676 V681.9 H415" fill="none" stroke="#111" stroke-width="1.5"/><path d="M417 681.9 L413 679.2 V684.6 Z" fill="#111"/><rect x="418.8" y="680.9" width="9.8" height="10.6" fill="#fafafa" stroke="#e62a3a" stroke-width="1.5"/><rect x="418.8" y="685" width="6.2" height="6.5" fill="#fff" stroke="#e62a3a" stroke-width="1.4"/>
<line x1="433.4" y1="672.6" x2="433.4" y2="691.6" stroke="#9a9a9a" stroke-width="1.2"/>
<circle cx="450" cy="682.3" r="9.4" fill="#f2f2f2" stroke="#a4a4a4" stroke-width="0.9"/><path d="M444 680.6 A6.3 6.3 0 0 1 455.4 678.8" fill="none" stroke="#a8a8a8" stroke-width="1.8"/><path d="M456 684 A6.3 6.3 0 0 1 444.6 685.8" fill="none" stroke="#a8a8a8" stroke-width="1.8"/><path d="M442.6 680 L446.8 680.4 L444.2 683.4 Z M457.4 684.6 L453.2 684.2 L455.8 681.2 Z" fill="#a8a8a8"/>
<line x1="463.7" y1="669" x2="463.7" y2="694.4" stroke="#fcfcfc" stroke-width="1"/><line x1="462.5" y1="669" x2="462.5" y2="694.4" stroke="#b4b4b4" stroke-width="1.2"/>
<line x1="467.1" y1="671" x2="467.1" y2="693" stroke="#a4a4a4" stroke-width="1.5" stroke-dasharray="1.4 1.9"/>
<path d="M483.2 673.7 L474.8 682.3 L483.2 690.5" fill="none" stroke="#111" stroke-width="2"/><path d="M480.8 676.6 Q483.8 682.3 480.8 688" fill="none" stroke="#111" stroke-width="1.3"/><path d="M484.4 682.3 H489" stroke="#111" stroke-width="2"/><path d="M491.8 682.3 L487.4 678.8 V685.8 Z" fill="#111"/>
<path d="M505.2 673.3 L496.6 682.2 L505.2 691" fill="none" stroke="#111" stroke-width="2"/><path d="M503 676.4 Q506.2 682.2 503 688" fill="none" stroke="#111" stroke-width="1.3"/><rect x="507.7" y="681.8" width="8" height="5" fill="#ee1616"/><path d="M509.4 682 V680 A2.3 2.3 0 0 1 514 680 V682" fill="none" stroke="#ee1616" stroke-width="1.3"/>
<path d="M519.8 675.2 L526.8 673.8 L536.1 685.4 L531 690.6 Z" fill="#fcfcfc" stroke="#111" stroke-width="1.25"/><path d="M528.4 680.8 L534.4 674.8" stroke="#e81830" stroke-width="1.5"/><path d="M535.6 673.6 L531 674.4 L534.8 678.2 Z" fill="#e81830"/><path d="M529.4 677.6 L532.2 680.6" stroke="#e81830" stroke-width="1.1"/>
<path d="M543.1 680.3 L550.6 690.6 L558.5 680.3" fill="none" stroke="#111" stroke-width="1.35"/><path d="M550.6 673 L554.4 678.6 L550.6 684 L546.8 678.6 Z" fill="#fff" stroke="#e81420" stroke-width="1.5"/>
<circle cx="573.4" cy="682.2" r="9.2" fill="#f8f4f4" stroke="#e81830" stroke-width="1.2"/><rect x="571" y="679.9" width="4.6" height="4.6" fill="#ee1010"/><circle cx="580" cy="682.2" r="1.2" fill="#111"/><path d="M573.4 688.6 V691" stroke="#111" stroke-width="1"/><path d="M581.8 682.2 L580.6 680.8" stroke="#111" stroke-width="0.7"/>
<line x1="587.7" y1="669" x2="587.7" y2="694.4" stroke="#fcfcfc" stroke-width="1"/><line x1="586.5" y1="669" x2="586.5" y2="694.4" stroke="#b4b4b4" stroke-width="1.2"/>
<line x1="591.2" y1="671" x2="591.2" y2="693" stroke="#a4a4a4" stroke-width="1.5" stroke-dasharray="1.4 1.9"/>
<path d="M601.4 674.4 L616.4 674.4 L611.6 683.4 H597.4 Z" fill="#e6f4f6" stroke="#8ad2e2" stroke-width="1"/><path d="M603 676.2 L613.6 676.2 L610.6 681.4 H600 Z" fill="#fbf3f3" stroke="#e8404a" stroke-width="1.2"/><path d="M600 686 L603.2 683 H613.8 V687 L610.4 690.6 H600 Z" fill="#fdf0fb" stroke="#1a1a1a" stroke-width="1.1" stroke-linejoin="round"/><path d="M600.4 686 H610.4 L613.6 683.2" fill="none" stroke="#e838d4" stroke-width="1.7"/><path d="M600 690.6 H610.6" stroke="#1a1a1a" stroke-width="1.5"/>
<path d="M620.9 679.4 L629.1 672.9 L637.8 679.4" fill="none" stroke="#ee3a40" stroke-width="1.5" stroke-linejoin="miter"/><path d="M621.6 682 L629.1 676 L637.2 682" fill="none" stroke="#ee3a40" stroke-width="1.6" stroke-linejoin="miter"/><path d="M629.1 686 V681" stroke="#e030d0" stroke-width="1.5"/><path d="M629.1 678.8 L626.8 682 H631.4 Z" fill="#e030d0"/><rect x="622.8" y="685.8" width="13.6" height="4.8" rx="1" fill="#fdeefa" stroke="#1a1a1a" stroke-width="1.1"/><path d="M623 686 H636.2" stroke="#e838d4" stroke-width="1.8"/><path d="M622.8 690.6 H636.4" stroke="#1a1a1a" stroke-width="1.5"/>
<line x1="643.4000000000001" y1="669" x2="643.4000000000001" y2="694.4" stroke="#fcfcfc" stroke-width="1"/><line x1="642.2" y1="669" x2="642.2" y2="694.4" stroke="#b4b4b4" stroke-width="1.2"/>
<line x1="646.8" y1="671" x2="646.8" y2="693" stroke="#a4a4a4" stroke-width="1.5" stroke-dasharray="1.4 1.9"/>
<path d="M662 674.8 H670.4 V690 H656" stroke="#ee1838" stroke-width="1.5" stroke-dasharray="1.5 1.3" fill="none"/>
<path d="M653.8 673.3 L657 684.6 L659.8 681.6 L665.2 686.8 L667 685 L661.8 679.8 L665 677.2 Z" fill="#44b428" stroke="#0e2a08" stroke-width="1.2" stroke-linejoin="round"/><circle cx="654.2" cy="673.6" r="1.3" fill="#2e7a1e"/>
<rect x="677.2" y="674" width="16.6" height="16.4" stroke="#ee1838" stroke-width="1.5" stroke-dasharray="1.5 1.3" fill="none"/><rect x="680.4" y="677.6" width="9.6" height="8.8" rx="1" fill="#52c032" stroke="#0e2208" stroke-width="1.4"/>
<path d="M707 674 H716 V683" stroke="#ee1838" stroke-width="1.5" stroke-dasharray="1.5 1.3" fill="none"/><path d="M699.4 680 V690.4 H712" stroke="#ee1838" stroke-width="1.5" stroke-dasharray="1.5 1.3" fill="none"/><rect x="702.4" y="676.4" width="10.8" height="10.8" fill="#52c032" stroke="#0e2208" stroke-width="1.8"/><path d="M703 681.4 H710" stroke="#c87a28" stroke-width="0.8" stroke-dasharray="1.4 1"/><circle cx="702.4" cy="676.2" r="1.7" fill="#3c9820" stroke="#0e2208" stroke-width="0.7"/><circle cx="713.3" cy="687.4" r="1.7" fill="#3c9820" stroke="#0e2208" stroke-width="0.7"/>
<line x1="721.8000000000001" y1="669" x2="721.8000000000001" y2="694.4" stroke="#fcfcfc" stroke-width="1"/><line x1="720.6" y1="669" x2="720.6" y2="694.4" stroke="#b4b4b4" stroke-width="1.2"/>
<line x1="725.5" y1="671" x2="725.5" y2="693" stroke="#a4a4a4" stroke-width="1.5" stroke-dasharray="1.4 1.9"/>
<path d="M732.6 688.6 L739 675.4 V688.6 Z" fill="#ee4cda" stroke="#6a5a6a" stroke-width="0.9"/><path d="M743.4 675.4 L749.6 688.6 H743.4 Z" fill="#ee4cda" stroke="#6a5a6a" stroke-width="0.9"/><line x1="741.3" y1="672.9" x2="741.3" y2="691" stroke="#111" stroke-width="1.7"/>
<line x1="755.1" y1="669" x2="755.1" y2="694.4" stroke="#fcfcfc" stroke-width="1"/><line x1="753.9" y1="669" x2="753.9" y2="694.4" stroke="#b4b4b4" stroke-width="1.2"/>
<line x1="758.8" y1="671" x2="758.8" y2="693" stroke="#a4a4a4" stroke-width="1.5" stroke-dasharray="1.4 1.9"/>
<rect x="769" y="676.4" width="11" height="5.8" rx="1" fill="#f050dc" stroke="#8a2a80" stroke-width="0.9"/><rect x="766.2" y="683.7" width="13.8" height="6.2" rx="1.2" fill="#f050dc" stroke="#7a2070" stroke-width="1"/><line x1="783.1" y1="673.8" x2="783.1" y2="691.3" stroke="#222" stroke-width="1.6"/>
<line x1="788.7" y1="669" x2="788.7" y2="694.4" stroke="#fcfcfc" stroke-width="1"/><line x1="787.5" y1="669" x2="787.5" y2="694.4" stroke="#b4b4b4" stroke-width="1.2"/>
<line x1="792" y1="671" x2="792" y2="693" stroke="#a4a4a4" stroke-width="1.5" stroke-dasharray="1.4 1.9"/>
<path d="M803.9 675.8 L799.6 690 H805.0 Z" fill="#e6e6fb"/>
<path d="M803.9 675.8 L799.6 690 H815.8" fill="none" stroke="#111" stroke-width="1.4"/>
<text x="805.0" y="687.9" font-size="8.4" fill="#2222dd" font-weight="bold" textLength="10.2" lengthAdjust="spacingAndGlyphs" stroke="#2222dd" stroke-width="0.3">15</text>
<path d="M826.6 675.8 L822.3 690 H827.7 Z" fill="#e6e6fb"/>
<path d="M826.6 675.8 L822.3 690 H838.5" fill="none" stroke="#111" stroke-width="1.4"/>
<text x="827.7" y="687.9" font-size="8.4" fill="#2222dd" font-weight="bold" textLength="10.2" lengthAdjust="spacingAndGlyphs" stroke="#2222dd" stroke-width="0.3">30</text>
<path d="M849.3 675.8 L845.0 690 H850.4 Z" fill="#e6e6fb"/>
<path d="M849.3 675.8 L845.0 690 H861.2" fill="none" stroke="#111" stroke-width="1.4"/>
<text x="850.4" y="687.9" font-size="8.4" fill="#2222dd" font-weight="bold" textLength="10.2" lengthAdjust="spacingAndGlyphs" stroke="#2222dd" stroke-width="0.3">45</text>
<path d="M872.0 675.8 L867.7 690 H873.1 Z" fill="#e6e6fb"/>
<path d="M872.0 675.8 L867.7 690 H883.9" fill="none" stroke="#111" stroke-width="1.4"/>
<text x="873.1" y="687.9" font-size="8.4" fill="#2222dd" font-weight="bold" textLength="10.2" lengthAdjust="spacingAndGlyphs" stroke="#2222dd" stroke-width="0.3">90</text>
<line x1="889.1" y1="672.6" x2="889.1" y2="691.6" stroke="#9a9a9a" stroke-width="1.2"/>
<rect x="962" y="670.6" width="22.4" height="22.8" fill="#cbe3f6" stroke="#a2cdf0" stroke-width="0.8"/>
<text x="900.9" y="682.0" font-size="8.2" fill="#2020dc" font-weight="bold" textLength="10.1" lengthAdjust="spacingAndGlyphs" stroke="#2020dc" stroke-width="0.3">10</text>
<text x="923.3" y="682.0" font-size="8.2" fill="#2020dc" font-weight="bold" textLength="10.2" lengthAdjust="spacingAndGlyphs" stroke="#2020dc" stroke-width="0.3">50</text>
<text x="943.5" y="682.0" font-size="8.2" fill="#2020dc" font-weight="bold" textLength="15.4" lengthAdjust="spacingAndGlyphs" stroke="#2020dc" stroke-width="0.3">100</text>
<text x="966.8" y="682.8" font-size="8.2" fill="#2020dc" font-weight="bold" textLength="15.4" lengthAdjust="spacingAndGlyphs" stroke="#2020dc" stroke-width="0.3">500</text>
<text x="990" y="682.0" font-size="8.2" fill="#2020dc" font-weight="bold" textLength="12.7" lengthAdjust="spacingAndGlyphs" stroke="#2020dc" stroke-width="0.3">1m</text>
<text x="1012.8" y="682.0" font-size="8.2" fill="#2020dc" font-weight="bold" textLength="12.6" lengthAdjust="spacingAndGlyphs" stroke="#2020dc" stroke-width="0.3">2m</text>
<text x="1035.4" y="682.0" font-size="8.2" fill="#2020dc" font-weight="bold" textLength="12.6" lengthAdjust="spacingAndGlyphs" stroke="#2020dc" stroke-width="0.3">5m</text>
<text x="1055.6" y="682.0" font-size="8.2" fill="#2020dc" font-weight="bold" textLength="19.0" lengthAdjust="spacingAndGlyphs" stroke="#2020dc" stroke-width="0.3">10m</text>
<rect x="894.90" y="687.2" width="1.6" height="5.3" fill="#111"/>
<rect x="898.69" y="687.2" width="1.6" height="5.3" fill="#111"/>
<rect x="902.47" y="684.2" width="1.6" height="8.3" fill="#111"/>
<rect x="906.25" y="687.2" width="1.6" height="5.3" fill="#111"/>
<rect x="910.04" y="687.2" width="1.6" height="5.3" fill="#111"/>
<rect x="913.82" y="687.2" width="1.6" height="5.3" fill="#111"/>
<rect x="917.61" y="687.2" width="1.6" height="5.3" fill="#111"/>
<rect x="921.39" y="687.2" width="1.6" height="5.3" fill="#111"/>
<rect x="925.18" y="684.2" width="1.6" height="8.3" fill="#111"/>
<rect x="928.96" y="687.2" width="1.6" height="5.3" fill="#111"/>
<rect x="932.75" y="687.2" width="1.6" height="5.3" fill="#111"/>
<rect x="936.53" y="687.2" width="1.6" height="5.3" fill="#111"/>
<rect x="940.32" y="687.2" width="1.6" height="5.3" fill="#111"/>
<rect x="944.10" y="687.2" width="1.6" height="5.3" fill="#111"/>
<rect x="947.89" y="684.2" width="1.6" height="8.3" fill="#111"/>
<rect x="951.67" y="687.2" width="1.6" height="5.3" fill="#111"/>
<rect x="955.46" y="687.2" width="1.6" height="5.3" fill="#111"/>
<rect x="959.24" y="687.2" width="1.6" height="5.3" fill="#111"/>
<rect x="963.93" y="688.1" width="1.6" height="5.3" fill="#111"/>
<rect x="967.71" y="688.1" width="1.6" height="5.3" fill="#111"/>
<rect x="971.50" y="685.1" width="1.6" height="8.3" fill="#111"/>
<rect x="975.28" y="688.1" width="1.6" height="5.3" fill="#111"/>
<rect x="979.07" y="688.1" width="1.6" height="5.3" fill="#111"/>
<rect x="982.85" y="688.1" width="1.6" height="5.3" fill="#111"/>
<rect x="985.74" y="687.2" width="1.6" height="5.3" fill="#111"/>
<rect x="989.52" y="687.2" width="1.6" height="5.3" fill="#111"/>
<rect x="993.31" y="684.2" width="1.6" height="8.3" fill="#111"/>
<rect x="997.09" y="687.2" width="1.6" height="5.3" fill="#111"/>
<rect x="1000.88" y="687.2" width="1.6" height="5.3" fill="#111"/>
<rect x="1004.66" y="687.2" width="1.6" height="5.3" fill="#111"/>
<rect x="1008.45" y="687.2" width="1.6" height="5.3" fill="#111"/>
<rect x="1012.23" y="687.2" width="1.6" height="5.3" fill="#111"/>
<rect x="1016.02" y="684.2" width="1.6" height="8.3" fill="#111"/>
<rect x="1019.80" y="687.2" width="1.6" height="5.3" fill="#111"/>
<rect x="1023.59" y="687.2" width="1.6" height="5.3" fill="#111"/>
<rect x="1027.37" y="687.2" width="1.6" height="5.3" fill="#111"/>
<rect x="1031.16" y="687.2" width="1.6" height="5.3" fill="#111"/>
<rect x="1034.94" y="687.2" width="1.6" height="5.3" fill="#111"/>
<rect x="1038.73" y="684.2" width="1.6" height="8.3" fill="#111"/>
<rect x="1042.51" y="687.2" width="1.6" height="5.3" fill="#111"/>
<rect x="1046.30" y="687.2" width="1.6" height="5.3" fill="#111"/>
<rect x="1050.08" y="687.2" width="1.6" height="5.3" fill="#111"/>
<rect x="1053.87" y="687.2" width="1.6" height="5.3" fill="#111"/>
<rect x="1057.65" y="687.2" width="1.6" height="5.3" fill="#111"/>
<rect x="1061.44" y="684.2" width="1.6" height="8.3" fill="#111"/>
<rect x="1065.22" y="687.2" width="1.6" height="5.3" fill="#111"/>
<rect x="1069.01" y="687.2" width="1.6" height="5.3" fill="#111"/>
<rect x="1072.80" y="687.2" width="1.6" height="5.3" fill="#111"/>
<!-- status -->
<circle cx="11.2" cy="706.6" r="6" fill="#f4f4f4" stroke="#b4b4b4" stroke-width="1.1"/><circle cx="11.2" cy="705" r="2.4" fill="#b8b8b8"/><path d="M10.2 707 H12.2 V710 H10.2 Z" fill="#b8b8b8"/>
<circle cx="37.5" cy="706.6" r="6" fill="#fafafa" stroke="#111" stroke-width="1.4"/><circle cx="37.5" cy="703.6" r="1.3" fill="#111"/><path d="M36.2 705.6 H38.8 V711 H36.2 Z" fill="#111"/>
<circle cx="63.4" cy="706.6" r="6" fill="#f4f4f4" stroke="#b4b4b4" stroke-width="1.1"/><circle cx="63.4" cy="704.6" r="2.3" fill="#b0b0b0"/><path d="M59.4 711 Q63.4 704.6 67.4 711 Z" fill="#b0b0b0"/>
<line x1="80.4" y1="703" x2="80.4" y2="711" stroke="#a0a0a0" stroke-width="1"/>
<text x="90.1" y="712.1" font-size="11.2" fill="#000" font-weight="normal" textLength="341.6" lengthAdjust="spacingAndGlyphs">Select objects. Shift to extend select. Drag mouse to select multiple.</text>
<line x1="813.6" y1="703.4" x2="813.6" y2="711" stroke="#a0a0a0" stroke-width="1"/>
<text x="822.7" y="712.1" font-size="11.2" fill="#000" font-weight="normal" textLength="74.1" lengthAdjust="spacingAndGlyphs">Measurements</text>
<rect x="905.8" y="697.8" width="168" height="15" fill="#f5f5f5" stroke="#cfcfcf" stroke-width="1"/>
</svg>
</body></html>
